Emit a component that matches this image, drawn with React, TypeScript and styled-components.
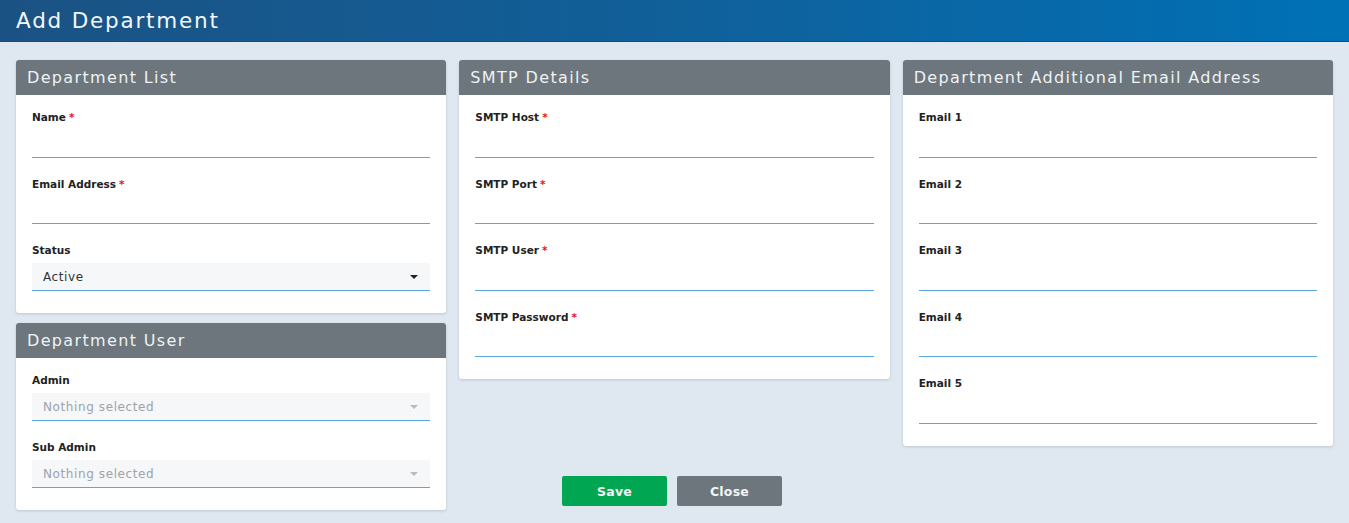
import React from "react";
import styled, { createGlobalStyle } from "styled-components";

const Global = createGlobalStyle`
  html, body { margin: 0; padding: 0; }
  body {
    background: #dfe8f1;
    font-family: "DejaVu Sans", "Inter", sans-serif;
    width: 1349px;
    min-height: 523px;
    overflow: hidden;
  }
  * { box-sizing: border-box; }
`;

const TopBar = styled.header`
  height: 42px;
  background: linear-gradient(90deg, #1b5283 0%, #10609a 50%, #0071b6 100%);
  border-bottom: 1px solid #0d4f80;
  display: flex;
  align-items: center;
  padding-left: 16px;
`;

const PageTitle = styled.h1`
  margin: 0;
  font-size: 21.5px;
  font-weight: 400;
  color: #f4f7fa;
  letter-spacing: 1.8px;
`;

const Grid = styled.main`
  display: grid;
  grid-template-columns: repeat(3, 1fr);
  column-gap: 13px;
  padding: 18px 16px 0;
  align-items: start;
`;

const Column = styled.div`
  display: flex;
  flex-direction: column;
  gap: 10px;
`;

const Panel = styled.section`
  background: #fff;
  border-radius: 3px;
  box-shadow: 0 1px 3px rgba(0, 0, 0, 0.15);
  overflow: hidden;
`;

const PanelHead = styled.div`
  height: 35px;
  background: #6c767c;
  display: flex;
  align-items: center;
  padding-left: 11px;
  font-size: 16px;
  font-weight: 400;
  color: #eef2f4;
  letter-spacing: 1.35px;
`;

const PanelBody = styled.div`
  padding: 16px 16px 22px;
  display: flex;
  flex-direction: column;
  gap: 20px;
`;

const Field = styled.div`
  display: flex;
  flex-direction: column;
`;

const Label = styled.label`
  font-size: 10.5px;
  line-height: 13px;
  font-weight: 700;
  color: #222;
  margin-bottom: 6px;
`;

const Req = styled.span`
  color: #e8141c;
  margin-left: 3px;
`;

const TextInput = styled.input`
  height: 27.5px;
  border: none;
  border-bottom: 1.5px solid #5ba6df;
  background: transparent;
  outline: none;
  font-family: inherit;
  font-size: 12px;
  padding: 0 11px;
`;

const Select = styled.div<{ $placeholder?: boolean }>`
  height: 28px;
  background: #f6f7f9;
  border-bottom: 1.5px solid #5ba6df;
  display: flex;
  align-items: center;
  justify-content: space-between;
  padding: 0 12px 0 11px;
  font-size: 12px;
  letter-spacing: 0.6px;
  color: ${(p) => (p.$placeholder ? "#9da3a8" : "#333")};
`;

const Caret = styled.span<{ $muted?: boolean }>`
  width: 0;
  height: 0;
  border-left: 4px solid transparent;
  border-right: 4px solid transparent;
  border-top: 4px solid ${(p) => (p.$muted ? "#b8bcc0" : "#222")};
`;

const Actions = styled.div`
  display: flex;
  justify-content: center;
  gap: 10px;
  margin-top: 87px;
  padding-right: 5px;
`;

const Button = styled.button<{ $variant: "save" | "close" }>`
  width: 105px;
  height: 30px;
  border: none;
  border-radius: 2px;
  font-family: inherit;
  font-size: 12.5px;
  font-weight: 700;
  letter-spacing: 0.2px;
  color: #f2f5f4;
  background: ${(p) => (p.$variant === "save" ? "#00a651" : "#6c767c")};
  cursor: pointer;
`;

const TextField = ({ label, required }: { label: string; required?: boolean }) => (
  <Field>
    <Label>
      {label}
      {required && <Req>*</Req>}
    </Label>
    <TextInput />
  </Field>
);

const SelectField = ({ label, value, placeholder }: { label: string; value: string; placeholder?: boolean }) => (
  <Field>
    <Label>{label}</Label>
    <Select $placeholder={placeholder}>
      <span>{value}</span>
      <Caret $muted={placeholder} />
    </Select>
  </Field>
);

export default function App() {
  return (
    <>
      <Global />
      <TopBar>
        <PageTitle>Add Department</PageTitle>
      </TopBar>
      <Grid>
        <Column>
          <Panel>
            <PanelHead>Department List</PanelHead>
            <PanelBody>
              <TextField label="Name" required />
              <TextField label="Email Address" required />
              <SelectField label="Status" value="Active" />
            </PanelBody>
          </Panel>
          <Panel>
            <PanelHead>Department User</PanelHead>
            <PanelBody>
              <SelectField label="Admin" value="Nothing selected" placeholder />
              <SelectField label="Sub Admin" value="Nothing selected" placeholder />
            </PanelBody>
          </Panel>
        </Column>
        <Column>
          <Panel>
            <PanelHead>SMTP Details</PanelHead>
            <PanelBody>
              <TextField label="SMTP Host" required />
              <TextField label="SMTP Port" required />
              <TextField label="SMTP User" required />
              <TextField label="SMTP Password" required />
            </PanelBody>
          </Panel>
          <Actions>
            <Button $variant="save">Save</Button>
            <Button $variant="close">Close</Button>
          </Actions>
        </Column>
        <Column>
          <Panel>
            <PanelHead>Department Additional Email Address</PanelHead>
            <PanelBody>
              <TextField label="Email 1" />
              <TextField label="Email 2" />
              <TextField label="Email 3" />
              <TextField label="Email 4" />
              <TextField label="Email 5" />
            </PanelBody>
          </Panel>
        </Column>
      </Grid>
    </>
  );
}
